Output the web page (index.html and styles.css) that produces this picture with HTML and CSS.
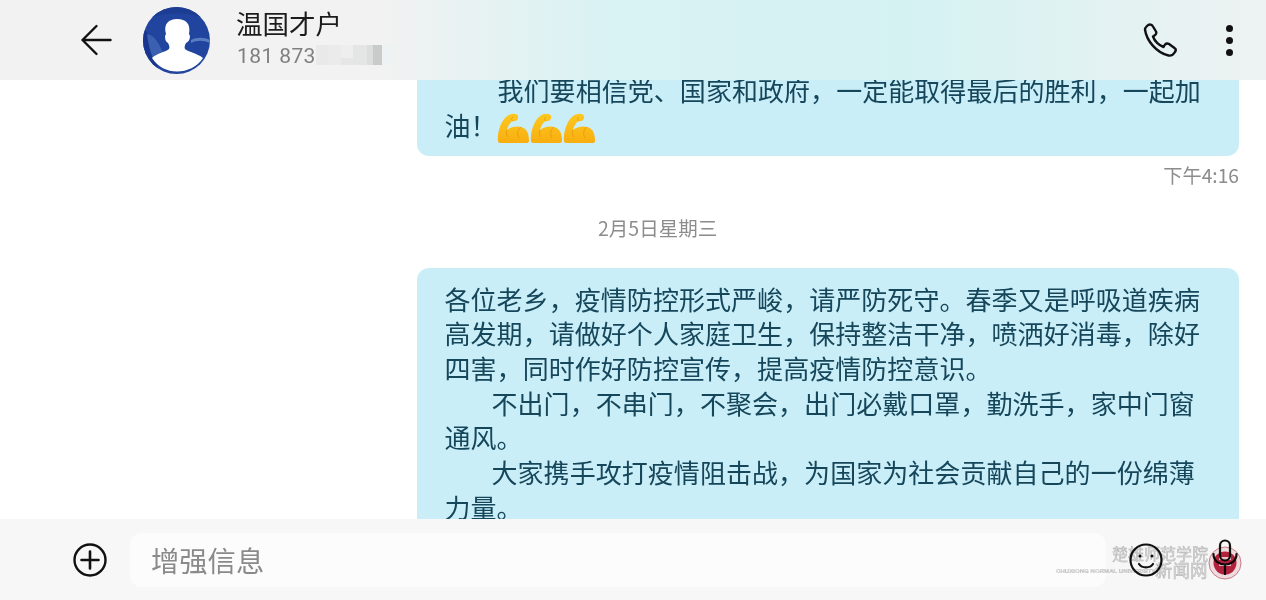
FILE: index.html
```html
<!DOCTYPE html>
<html lang="zh-CN">
<head>
    <meta charset="UTF-8">
    <meta name="viewport" content="width=device-width, initial-scale=1.0">
    <title>温国才户</title>
    <link rel="stylesheet" href="styles.css">
</head>
<body>
    <header class="top-bar">
        <svg class="back-icon" width="32" height="32" viewBox="0 0 32 32" fill="none" stroke="#111" stroke-width="2.4" stroke-linecap="round" stroke-linejoin="round">
            <path d="M30 16H2M16 2L2 16l14 14"/>
        </svg>
        <svg class="avatar" width="67" height="67" viewBox="0 0 67 67">
            <defs><clipPath id="avatar-clip"><circle cx="33.5" cy="33.5" r="33.5"/></clipPath></defs>
            <g clip-path="url(#avatar-clip)">
                <rect width="67" height="67" fill="#21459f"/>
                <path d="M0 22C8 26 13 38 15 67H0z" fill="#18368f"/>
                <path d="M4 27C11 28 16 36 20 46L10 52C7 44 5 35 4 27z" fill="#3b60b2"/>
                <path d="M0 0H67V14C50 4 20 4 0 14z" fill="#1d3c94"/>
                <path d="M48 33C54 30 61 30 67 33v3C60 33 54 33 48 36z" fill="#5a7dc4"/>
                <path d="M9 51C14 46 23 45 26 42C27 40 26 38 25 36C23 35 22 33 22 29L23 27C20 17 26 12 34 12C43 12 48 17 46 27L47 29C47 33 45 35 43 36C42 38 41 40 42 42C45 45 54 46 60 51C54 60 44 64.500 34 64.500C24 64.500 15 60 9 51z" fill="#fff"/>
            </g>
        </svg>
        <div class="contact">
            <div class="contact-name">温国才户</div>
            <div class="contact-phone">
                <span>181 873</span>
                <svg class="mosaic" width="76" height="20" viewBox="0 0 76 20">
                    <rect x="0" width="12" height="20" fill="#e9e9e9"/>
                    <rect x="12" width="13" height="20" fill="#ebebeb"/>
                    <rect x="25" y="13" width="12" height="7" fill="#e6e6e6"/>
                    <rect x="25" width="12" height="13" fill="#eeeeee"/>
                    <rect x="37" width="14" height="20" fill="#e4e6e6"/>
                    <rect x="51" width="6" height="20" fill="#dcdddd"/>
                    <rect x="57" width="9" height="20" fill="#c9cbcb"/>
                    <rect x="66" width="10" height="20" fill="#edf2f2"/>
                </svg>
            </div>
        </div>
        <div class="top-actions">
            <svg class="phone-icon" width="34" height="34" viewBox="0 0 34 34" fill="none" stroke="#111" stroke-width="2.4" stroke-linejoin="round">
                <path d="M2 6.5C2 4.5 5 1.5 7 1.5C8.5 1.5 9.5 2.5 10 3.5L13 8.5C13.7 10 13 11.5 11.5 12.5L10 13.5C11.5 18 16 22.500 20.500 24L22 21.500C23 20.500 24.500 20 26 21L31.500 25C33 26 33 27.500 32 29C30.500 31.500 28 33 25.500 32.500C14 30 3.500 18 2 6.500z"/>
            </svg>
            <div class="dots"><i></i><i></i><i></i></div>
        </div>
    </header>

    <main class="messages">
        <div class="bubble bubble-first">
            <p class="indent-wide">我们要相信党、国家和政府，一定能取得最后的胜利，一起加油！<span class="muscles"><svg width="32" height="30" viewBox="0 0 32 30"><use href="#muscle"/></svg><svg width="32" height="30" viewBox="0 0 32 30"><use href="#muscle"/></svg><svg width="32" height="30" viewBox="0 0 32 30"><use href="#muscle"/></svg></span></p>
        </div>
        <div class="msg-time">下午4:16</div>
        <div class="msg-date">2月5日星期三</div>
        <div class="bubble">
            <p>各位老乡，疫情防控形式严峻，请严防死守。春季又是呼吸道疾病高发期，请做好个人家庭卫生，保持整洁干净，喷洒好消毒，除好四害，同时作好防控宣传，提高疫情防控意识。</p>
            <p class="indent">不出门，不串门，不聚会，出门必戴口罩，勤洗手，家中门窗通风。</p>
            <p class="indent">大家携手攻打疫情阻击战，为国家为社会贡献自己的一份绵薄力量。</p>
        </div>
    </main>

    <footer class="composer">
        <svg class="plus-icon" width="34" height="34" viewBox="0 0 34 34" fill="none" stroke="#111" stroke-linecap="round">
            <circle cx="17" cy="17" r="15.500" stroke-width="2.400"/>
            <path d="M17 8.500v17M8.500 17h17" stroke-width="2.600"/>
        </svg>
        <div class="input-box">增强信息</div>
        <svg class="smile-icon" width="34" height="34" viewBox="0 0 34 34" fill="none" stroke="#111" stroke-width="2.200" stroke-linecap="round">
            <circle cx="17" cy="17" r="15.500"/>
            <circle cx="11" cy="13" r="1.500" fill="#111" stroke="none"/>
            <circle cx="23" cy="13" r="1.500" fill="#111" stroke="none"/>
            <path d="M10 21c3 4.500 11 4.500 14 0"/>
        </svg>
        <svg class="mic-icon" width="26" height="36" viewBox="0 0 26 36" fill="none" stroke="#111" stroke-width="2.200" stroke-linecap="round">
            <rect x="8" y="1.500" width="10" height="20" rx="5"/>
            <path d="M1.500 15c0 14 23 14 23 0M13 27v8"/>
        </svg>
    </footer>

    <div class="watermark">
        <div class="wm-text">
            <div class="wm-school">楚雄师范学院</div>
            <div class="wm-row"><span class="wm-en">CHUXIONG NORMAL UNIVERSITY</span><span class="wm-site">新闻网</span></div>
        </div>
        <svg class="wm-seal" width="34" height="34" viewBox="0 0 34 34">
            <circle cx="17" cy="17" r="16" fill="#f6e2e5" stroke="#cf7f8c" stroke-width="1"/>
            <circle cx="17" cy="17" r="11.500" fill="#b8233f"/>
            <rect x="11" y="11" width="12" height="3" fill="#efc5cc"/>
            <rect x="11" y="18" width="12" height="2" fill="#efc5cc"/>
        </svg>
    </div>

    <svg class="sprite" width="0" height="0">
        <defs>
            <linearGradient id="muscle-fill" x1="0" y1="0" x2="0" y2="1">
                <stop offset="0" stop-color="#fdc81f"/>
                <stop offset="1" stop-color="#f8ae10"/>
            </linearGradient>
            <g id="muscle">
                <path d="M1 28C0 20 4 8 9 4C13 0 20 0 21 3C22 6 19 9 16 8C13 9 11 13 10 17C15 13 24 12 29 17C31 19 32 24 32 28C32 29 31 30 30 30H3C2 30 1 29 1 28z" fill="url(#muscle-fill)"/>
                <path d="M16 8C14 7 14 5 16 4M10 17C9 20 9 22 11 24M24 14C20 17 20 21 22 25" fill="none" stroke="#e0980f" stroke-width="0.800"/>
            </g>
        </defs>
    </svg>
</body>
</html>
```

FILE: styles.css
```css
* { box-sizing: border-box; }
html, body { height: 100%; }
body { margin: 0; width: 1266px; height: 600px; overflow: hidden; display: flex; flex-direction: column; position: relative; background: #fff; font-family: "Noto Sans CJK SC", "Noto Sans", sans-serif; }

.top-bar { flex: 0 0 80px; height: 80px; display: flex; align-items: center; padding-left: 80px; position: relative; background: linear-gradient(90deg, #f2f2f2 0, #f2f2f2 30%, #d9f2f3 48%, #d5f2f2 72%, #eef2f2 100%); }
.back-icon { flex: none; width: 33px; }
.avatar { flex: none; margin-left: 30px; }
.contact { margin-left: 27px; display: flex; flex-direction: column; }
.contact-name { font-size: 26.5px; line-height: 36px; color: #1c1c1c; margin: -6px 0 0 -1px; }
.contact-phone { display: flex; align-items: center; height: 28px; margin-top: 1px; font-family: Roboto, "Noto Sans", sans-serif; font-size: 21px; color: #808080; letter-spacing: 0.4px; }
.mosaic { flex: none; margin-top: -1px; }
.top-actions { margin-left: auto; display: flex; align-items: center; padding-right: 33px; }
.phone-icon { flex: none; margin-right: 1px; }
.dots { display: flex; flex-direction: column; gap: 5px; margin-left: 48px; }
.dots i { display: block; width: 7px; height: 7px; border-radius: 50%; background: #111; }

.messages { flex: 1; min-height: 0; overflow: hidden; display: flex; flex-direction: column; align-items: flex-end; padding-right: 27px; }
.bubble { flex: none; width: 822px; padding: 14px 27px 12px 27.5px; background: #c9eef8; border-radius: 12px; color: #16465a; font-size: 26px; letter-spacing: 0.05px; line-height: 34.67px; }
.bubble p { margin: 0; }
.bubble-first { margin-top: -21px; padding-bottom: 13px; border-radius: 0 0 12px 12px; }
.indent { text-indent: 47px; }
.indent-wide { text-indent: 53px; }
.muscles { display: inline-flex; gap: 1px; margin-left: 0; vertical-align: -7px; text-indent: 0; }
.muscles svg { display: block; }
.msg-time { margin-top: 6px; font-size: 19.2px; line-height: 26px; color: #8c8c8c; }
.msg-date { align-self: flex-start; margin: 27px 0 0 598px; font-size: 19.5px; line-height: 26px; color: #8c8c8c; }
.msg-date + .bubble { margin-top: 27px; }

.composer { flex: 0 0 81px; display: flex; align-items: center; background: #f7f7f7; padding-left: 73px; padding-top: 1px; }
.plus-icon { flex: none; }
.input-box { width: 976px; height: 54px; margin-left: 23px; padding-left: 21px; background: #fcfcfc; border-radius: 12px; font-size: 28.3px; line-height: 54px; color: #8a8a8a; }
.smile-icon { flex: none; margin-left: 23px; }
.mic-icon { flex: none; margin-left: 49px; margin-top: -6px; }

.watermark { position: absolute; left: 1056px; top: 545px; display: flex; align-items: flex-start; mix-blend-mode: multiply; }
.wm-text { width: 152px; color: #e2e2e2; -webkit-text-stroke: 0.4px #b0b0b0; }
.wm-school { font-size: 16px; line-height: 16px; margin-left: 56px; white-space: nowrap; }
.wm-row { display: flex; align-items: flex-end; }
.wm-en { width: 99px; font-family: "Liberation Sans", sans-serif; font-size: 6.1px; line-height: 17px; font-weight: bold; color: #dedede; -webkit-text-stroke: 0.2px #a8a8a8; white-space: nowrap; }
.wm-site { margin-left: 0; font-size: 17.5px; line-height: 18px; white-space: nowrap; }
.wm-seal { flex: none; margin-top: 1px; }
.sprite { position: absolute; }
```
